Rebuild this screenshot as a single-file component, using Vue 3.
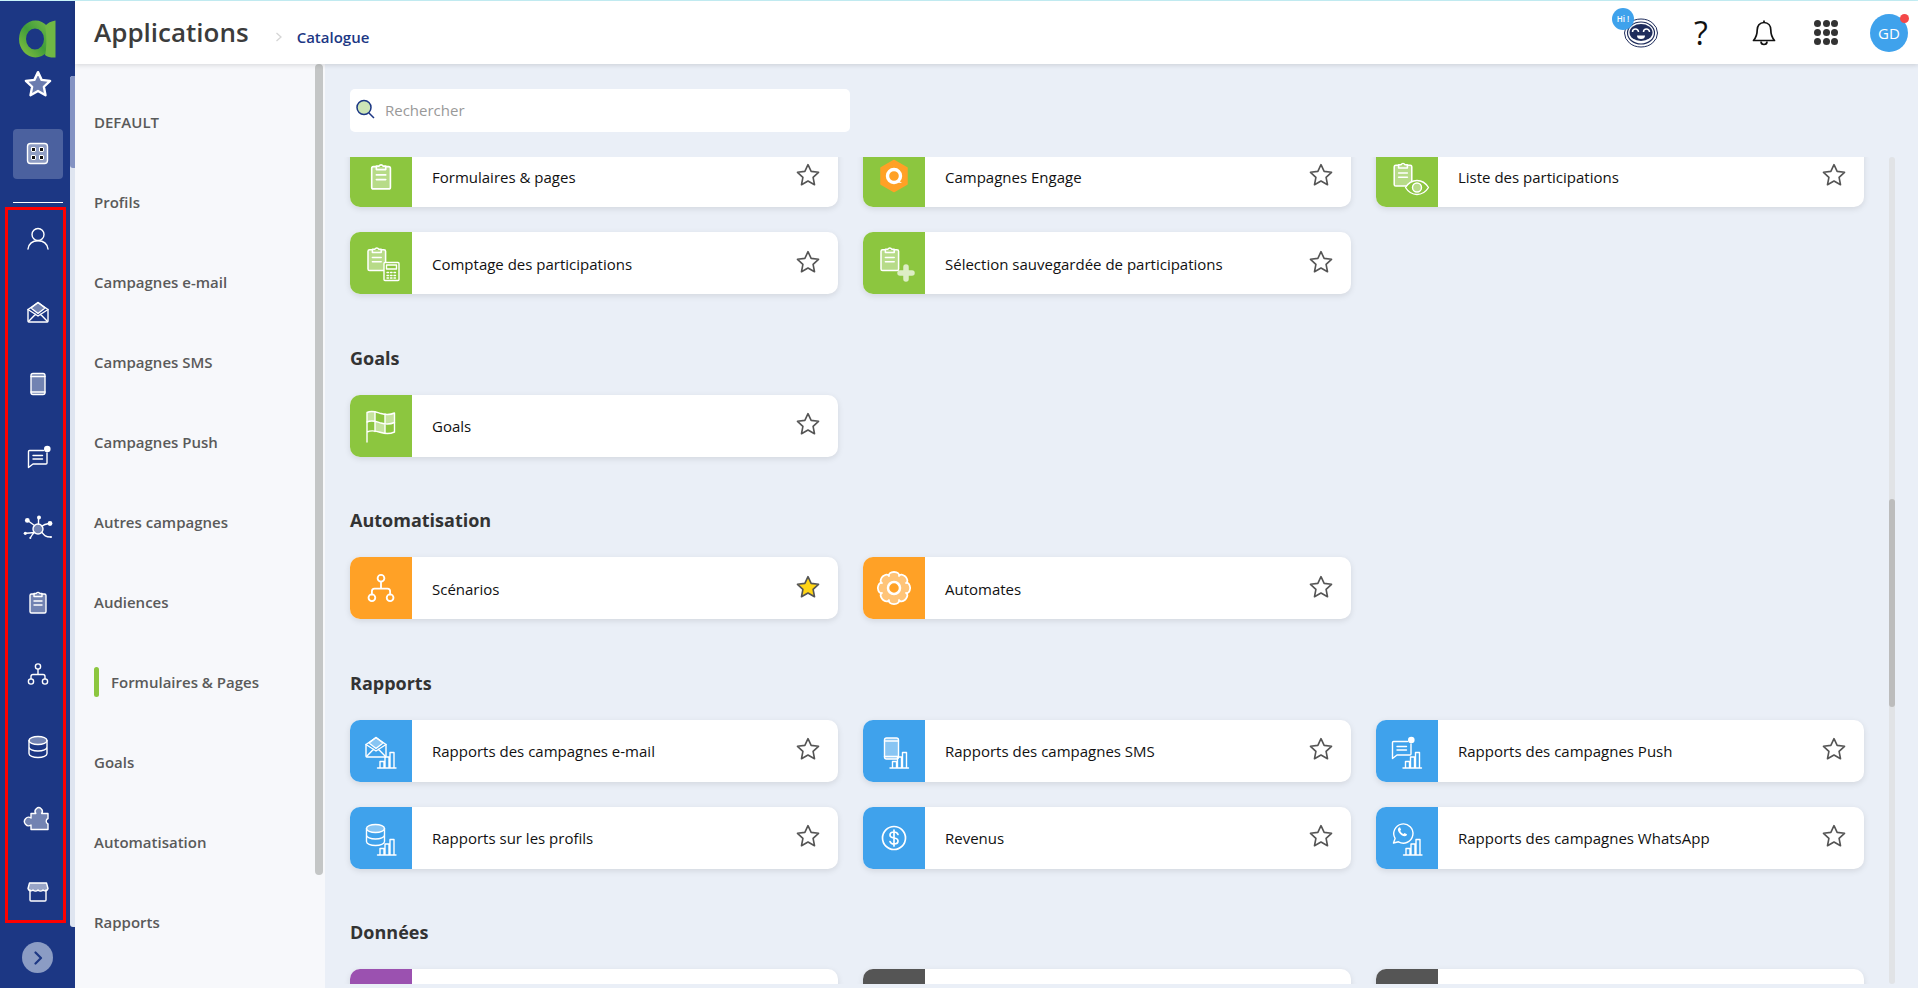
<script setup>
// outline of the cog drawn on the Automates tile
function gearPath() {
  const teeth = 8
  const step = Math.PI / teeth
  const p = (r, an) => `${(25 + r * Math.cos(an)).toFixed(2)} ${(25 + r * Math.sin(an)).toFixed(2)}`
  let d = `M${p(13, -step)} `
  for (let i = 0; i < teeth; i++) {
    const a = (i / teeth) * Math.PI * 2
    d += `C${p(15.6, a - step * 0.95)} ${p(16.2, a - step * 0.55)} ${p(16.2, a)} `
    d += `C${p(16.2, a + step * 0.55)} ${p(15.6, a + step * 0.95)} ${p(13, a + step)} `
  }
  return d + 'Z'
}
const gear = gearPath()

const menu = ['DEFAULT', 'Profils', 'Campagnes e-mail', 'Campagnes SMS', 'Campagnes Push', 'Autres campagnes', 'Audiences', 'Formulaires & Pages', 'Goals', 'Automatisation', 'Rapports']

const railIcons = ['user', 'mail', 'phone', 'chat', 'net', 'clip', 'tree', 'db', 'puzzle', 'store']

const sections = [
  {
    title: '',
    cards: [
      { label: 'Formulaires & pages', color: 'green', icon: 'form' },
      { label: 'Campagnes Engage', color: 'green', icon: 'engage' },
      { label: 'Liste des participations', color: 'green', icon: 'clipEye' },
      { label: 'Comptage des participations', color: 'green', icon: 'clipCalc' },
      { label: 'Sélection sauvegardée de participations', color: 'green', icon: 'clipPlus' }
    ]
  },
  { title: 'Goals', cards: [{ label: 'Goals', color: 'green', icon: 'flag' }] },
  {
    title: 'Automatisation',
    cards: [
      { label: 'Scénarios', color: 'orange', icon: 'scenario', fav: true },
      { label: 'Automates', color: 'orange', icon: 'gear' }
    ]
  },
  {
    title: 'Rapports',
    cards: [
      { label: 'Rapports des campagnes e-mail', color: 'blue', icon: 'repMail' },
      { label: 'Rapports des campagnes SMS', color: 'blue', icon: 'repPhone' },
      { label: 'Rapports des campagnes Push', color: 'blue', icon: 'repChat' },
      { label: 'Rapports sur les profils', color: 'blue', icon: 'repDb' },
      { label: 'Revenus', color: 'blue', icon: 'dollar' },
      { label: 'Rapports des campagnes WhatsApp', color: 'blue', icon: 'repWa' }
    ]
  },
  {
    title: 'Données',
    cards: [
      { label: '', color: 'purple' },
      { label: '', color: 'dark' },
      { label: '', color: 'dark' }
    ]
  }
]
</script>

<template>
  <div class="page">
    <svg class="sprites" width="0" height="0">
      <defs>
        <g id="g-clip">
          <path class="soft" d="M11 7H8.500A1.500 1.500 0 0 0 7 8.500v16A1.500 1.500 0 0 0 8.500 26h13a1.500 1.500 0 0 0 1.500-1.500v-16A1.500 1.500 0 0 0 21.500 7H19" />
          <path d="M11 9.500V6.500h2.300a1.900 1.900 0 0 1 3.400 0H19v3z" />
          <path d="M11 14h8M11 18h8" />
        </g>
        <g id="g-user">
          <circle cx="15" cy="10.500" r="6" />
          <path d="M5 25c.8-5 4.600-8.200 10-8.200S24.200 20 25 25" />
        </g>
        <g id="g-mail">
          <path class="soft" d="M8 11 15 5.500l7 5.500-7 5.500z" />
          <path d="M5 12.500 15 5.500l10 7v11.500a1 1 0 0 1-1 1H6a1 1 0 0 1-1-1z" />
          <path d="M5 12.500l10 6.500 10-6.500M5.500 24.500l7-7.200M24.500 24.500l-7-7.200" />
        </g>
        <g id="g-phone">
          <rect class="soft" x="8" y="4.500" width="14" height="21" rx="2" />
          <path d="M8 7.500h14M8 23h14" />
        </g>
        <g id="g-chat">
          <path d="M20.500 8.500H6.500a1 1 0 0 0-1 1V25.500L10 22h13a1 1 0 0 0 1-1V11" />
          <path d="M10 13.500h9.500M10 17h9.500" />
          <circle class="solid" cx="24.300" cy="7" r="3.300" />
        </g>
        <g id="g-net">
          <circle class="soft" cx="15" cy="15" r="5" />
          <path d="M11.500 11.500 6 7.500M15.500 10V4.500M19 12c2-1.500 4-2 7-2.500M11 18.500c-3 .5-5.500.8-8 .8M19 18.500c2 2.500 3 4.500 8.500 4.500M11.500 18.500c-2 1.500-3 3-4 5" />
          <g class="solid">
            <circle cx="4.300" cy="6.400" r="2.400" />
            <circle cx="16" cy="3.500" r="2" />
            <circle cx="27" cy="9.500" r="2.400" />
            <circle cx="2.300" cy="19.300" r="1.600" />
            <circle cx="28" cy="23" r="1" />
            <circle cx="7.300" cy="24" r="1" />
          </g>
        </g>
        <g id="g-tree">
          <circle cx="15" cy="7.500" r="2.600" />
          <path d="M15 10.100V15.500M8 20v-2.500a2 2 0 0 1 2-2h10a2 2 0 0 1 2 2V20" />
          <circle cx="8" cy="22.500" r="2.600" />
          <circle cx="22" cy="22.500" r="2.600" />
        </g>
        <g id="g-db">
          <ellipse class="soft" cx="15" cy="8.500" rx="9" ry="4" />
          <path d="M6 8.500v13c0 2.200 4 4 9 4s9-1.800 9-4v-13M6 15c0 2.200 4 4 9 4s9-1.800 9-4" />
        </g>
        <g id="g-puzzle">
          <path class="soft" d="M8 9.500h4.800a3.600 3.600 0 1 1 5.800 0H25v5a3 3 0 0 0 0 5.500v5.500H8v-4.500a4.200 4.200 0 1 1 0-7z" />
        </g>
        <g id="g-store">
          <path d="M7 13v10a1 1 0 0 0 1 1h14a1 1 0 0 0 1-1V13" />
          <path class="strong" d="M6.500 6h17L25 11.500a3 3 0 0 1-5 1.500 3.300 3.300 0 0 1-5 0 3.300 3.300 0 0 1-5 0 3 3 0 0 1-5-1.500z" />
        </g>
        <g id="g-bars">
          <path d="M0 16h18.500M2.500 16V9.500h4V16M7.500 16V5h4v11M12.500 16V.5h4V16" />
        </g>
        <path id="g-star" d="M12 2.500l2.900 6.200 6.800.8-5 4.700 1.300 6.800-6-3.400-6 3.400 1.300-6.800-5-4.700 6.800-.8z" />

        <linearGradient id="logo-ring" x1="0" y1="1" x2="1" y2="0">
          <stop offset="0" stop-color="#8cc63f" />
          <stop offset=".5" stop-color="#3f9c3a" />
          <stop offset="1" stop-color="#7cc04a" />
        </linearGradient>
      </defs>
    </svg>

    <div class="topline"></div>

    <div class="shell">
      <aside class="rail">
        <div class="rail-logo">
          <svg width="40" height="42" viewBox="0 0 40 42">
            <path fill-rule="evenodd" fill="url(#logo-ring)" d="M17.500 1.500a16.500 18.500 0 1 0 0 37 16.500 18.500 0 1 0 0-37zM17 9.500a9 10.500 0 1 1 0 21 9 10.500 0 1 1 0-21z" />
            <path d="M37.500 1.500v37c-4 .3-8-.5-10.500-2.500 1.800-5 1.800-23 0-29 2.500-3 6.500-5 10.500-5.500z" fill="#6fb844" />
          </svg>
        </div>

        <div class="rail-body">
          <div class="rail-col">
            <svg class="rail-star" width="30" height="30" viewBox="0 0 24 24">
              <use href="#g-star" />
            </svg>
            <div class="rail-active">
              <svg width="30" height="30" viewBox="0 0 30 30" class="line-icon">
                <rect class="soft" x="4.500" y="4.500" width="20" height="20" rx="3" />
                <g class="apps-dots">
                  <rect x="8.500" y="8.500" width="4" height="4" rx=".5" />
                  <rect x="16.500" y="8.500" width="4" height="4" rx=".5" />
                  <rect x="8.500" y="16.500" width="4" height="4" rx=".5" />
                  <rect x="16.500" y="16.500" width="4" height="4" rx=".5" />
                </g>
              </svg>
            </div>
            <div class="rail-sep"></div>
            <div class="rail-group">
              <svg v-for="ic in railIcons" :key="ic" class="line-icon" width="30" height="30" viewBox="0 0 30 30">
                <use :href="'#g-' + ic" />
              </svg>
            </div>
          </div>
          <div class="rail-scroll"><div class="rail-thumb"></div></div>
        </div>

        <div class="rail-foot">
          <div class="rail-toggle">
            <svg width="14" height="14" viewBox="0 0 14 14">
              <path d="M4.500 1.500 10 7l-5.500 5.500" fill="none" stroke="#1c3784" stroke-width="2.200" stroke-linecap="round" stroke-linejoin="round" />
            </svg>
          </div>
        </div>
      </aside>

      <div class="right">
        <header class="topbar">
          <h1 class="title">Applications</h1>
          <svg class="crumb-sep" width="10" height="12" viewBox="0 0 10 12">
            <path d="M2.500 2 7 6l-4.500 4" fill="none" stroke="#d5d5d5" stroke-width="1.300" />
          </svg>
          <span class="crumb">Catalogue</span>

          <div class="tools">
            <div class="bot">
              <svg width="36" height="32" viewBox="0 0 36 32">
                <ellipse cx="18" cy="16" rx="16.500" ry="14" fill="#fff" stroke="#1f2d5c" stroke-width="1" />
                <ellipse cx="18" cy="16" rx="13.500" ry="11" fill="#fff" stroke="#1f2d5c" stroke-width="1.200" />
                <ellipse cx="18" cy="15.500" rx="11.500" ry="8.500" fill="#1f2d5c" />
                <path d="M9.500 15a3 3 0 0 1 6 0M20.500 15a3 3 0 0 1 6 0" fill="none" stroke="#fff" stroke-width="1.500" />
                <path d="M14 18.500a4 3.500 0 0 0 8 0z" fill="#fff" />
              </svg>
              <span class="hi">Hi !</span>
            </div>
            <span class="help">?</span>
            <svg class="bell" width="26" height="28" viewBox="0 0 26 28">
              <path d="M13 3.500c-4.500 0-6.800 3.500-6.800 7.500 0 5-1.200 7.500-3.700 10.500h21c-2.500-3-3.700-5.500-3.700-10.500 0-4-2.300-7.500-6.800-7.500z" fill="none" stroke="#111" stroke-width="1.700" stroke-linejoin="round" />
              <path d="M13 1.500v2M10 22.500a3 3 0 0 0 6 0" fill="none" stroke="#111" stroke-width="1.700" />
            </svg>
            <div class="dots">
              <i v-for="n in 9" :key="n"></i>
            </div>
            <div class="avatar">GD<span class="avatar-dot"></span></div>
          </div>
        </header>

        <div class="below">
          <nav class="side">
            <ul class="side-list">
              <li v-for="m in menu" :key="m" class="side-item">
                <span v-if="m === 'Formulaires & Pages'" class="side-mark"></span>
                {{ m }}
              </li>
            </ul>
            <div class="side-thumb"></div>
          </nav>

          <main class="content">
            <div class="search">
              <svg width="26" height="26" viewBox="0 0 26 26">
                <circle cx="11" cy="9.500" r="7" fill="#cde5b6" stroke="#1c3784" stroke-width="1.500" />
                <path d="M16 15l5 5" stroke="#1c3784" stroke-width="1.500" />
              </svg>
              <span class="search-ph">Rechercher</span>
            </div>

            <div class="scroller">
              <div class="catalog">
                <div class="catalog-inner">
                  <section v-for="(s, si) in sections" :key="si" class="section">
                    <h2 v-if="s.title" class="section-title">{{ s.title }}</h2>
                    <div class="grid">
                      <article v-for="(c, ci) in s.cards" :key="ci" class="card">
                        <div class="tile" :class="c.color">
                          <svg v-if="c.icon" class="line-icon" width="50" height="50" viewBox="0 0 50 50">
                            <use v-if="c.icon === 'form'" href="#g-clip" transform="translate(7.500 7.500) scale(1.170)" />
                            <template v-else-if="c.icon === 'engage'">
                              <path d="M25 9.500l13 7.500v16l-13 7.500-13-7.500V17z" fill="#ffa126" stroke="#ffa126" stroke-linejoin="round" stroke-width="1.500" />
                              <circle cx="25" cy="25" r="6.500" fill="none" stroke="#fff" stroke-width="3.400" />
                              <path class="solid" d="M29 29l4 3-5.500-.5z" />
                            </template>
                            <template v-else-if="c.icon === 'clipEye'">
                              <use href="#g-clip" transform="translate(4.500 6.500) scale(1.100)" />
                              <path d="M23.500 36.500c2.500-4 6.500-7 11.500-7s9 3 11.500 7c-2.500 4-6.500 7-11.500 7s-9-3-11.500-7z" fill="#8cc63f" />
                              <circle class="soft" cx="35" cy="36.500" r="4.500" />
                            </template>
                            <template v-else-if="c.icon === 'clipCalc'">
                              <use href="#g-clip" transform="translate(4.300 4) scale(1.100)" />
                              <rect x="28" y="24.500" width="15" height="18" rx="1" fill="#8cc63f" />
                              <rect x="30.500" y="27" width="10" height="4" />
                              <path d="M31 34.500h9M31 37.500h9M31 40h9" stroke-dasharray="1.500 2" />
                            </template>
                            <template v-else-if="c.icon === 'clipPlus'">
                              <use href="#g-clip" transform="translate(4.300 4) scale(1.100)" />
                              <path d="M37 29v12M31 35h12" stroke="#fff" stroke-opacity=".7" stroke-width="5.500" stroke-linecap="round" />
                            </template>
                            <template v-else-if="c.icon === 'flag'">
                              <g class="flag-cells">
                                <path d="M11 11.500c3-1.500 5-1.500 8-.5v9.500c-3-1-5-1-8 .5z" />
                                <path d="M29 13c3 .8 6 .6 9.500-1v9.500c-3.500 1.600-6.500 1.800-9.500 1z" />
                                <path d="M19 20.500c3.500 1 6.500 2 10 2.500v9.500c-3.500-.5-6.500-1.500-10-2.500z" />
                              </g>
                              <path d="M11 41V11.500c5-2.500 9-.5 14 1s9 1.500 13.500-.5v19c-4.500 2-9 2-13.500.5s-9-3-14-.5" />
                              <path d="M11 21c5-2.500 9-.5 14 1s9 1.500 13.500-.5M19 11v19.500M29 13v19.500" />
                            </template>
                            <use v-else-if="c.icon === 'scenario'" href="#g-tree" transform="translate(5.500 5.500) scale(1.300)" />
                            <template v-else-if="c.icon === 'gear'">
                              <path class="soft" :d="gear" stroke-width="1.800" />
                              <circle cx="25" cy="25" r="6" fill="#ffa126" stroke-width="2.500" />
                            </template>
                            <template v-else-if="c.icon === 'repMail'">
                              <use href="#g-mail" transform="translate(5 6)" />
                              <use href="#g-bars" transform="translate(21.500 26)" />
                            </template>
                            <template v-else-if="c.icon === 'repPhone'">
                              <use href="#g-phone" transform="translate(7.500 7.500)" />
                              <use href="#g-bars" transform="translate(21 26)" />
                            </template>
                            <template v-else-if="c.icon === 'repChat'">
                              <use href="#g-chat" transform="translate(5 7)" />
                              <use href="#g-bars" transform="translate(21 26)" />
                            </template>
                            <template v-else-if="c.icon === 'repDb'">
                              <use href="#g-db" transform="translate(4.500 7)" />
                              <use href="#g-bars" transform="translate(21.500 26)" />
                            </template>
                            <template v-else-if="c.icon === 'dollar'">
                              <circle cx="25" cy="25" r="11.500" stroke-width="1.700" />
                              <path d="M29 21.500c-.5-1.500-2-2.500-4-2.500-2.300 0-4 1.200-4 3s1.700 2.700 4 3 4 1.200 4 3-1.700 3-4 3c-2 0-3.500-1-4-2.500M25 17v16" stroke-width="1.700" />
                            </template>
                            <template v-else-if="c.icon === 'repWa'">
                              <path d="M11.500 30l1.600-4.600a9.600 9.600 0 1 1 3.400 3.400z" />
                              <path class="solid" d="M17 14.500c-1.500 1-1.500 3 0 5 1.500 2.200 3.500 3.700 5.800 3.700 1.200 0 2.200-1 2.200-2l-2.500-1.300-1 1c-1.500-.5-2.700-1.700-3.300-3.200l.9-1-1.100-2.400z" />
                              <use href="#g-bars" transform="translate(21.500 26)" />
                            </template>
                          </svg>
                        </div>
                        <span class="card-label">{{ c.label }}</span>
                        <svg class="card-star" :class="{ fav: c.fav }" width="26" height="26" viewBox="0 0 24 24">
                          <use href="#g-star" />
                        </svg>
                      </article>
                    </div>
                  </section>
                </div>
              </div>
              <div class="catalog-scroll"><div class="catalog-thumb"></div></div>
            </div>
          </main>
        </div>
      </div>
    </div>
  </div>
</template>

<style scoped>
.page {
  height: 988px;
  display: flex;
  flex-direction: column;
  overflow: hidden;
  font-family: "Open Sans", "Liberation Sans", sans-serif;
  background: #eaeff7;
}

.sprites {
  position: absolute;
}

.topline {
  height: 1px;
  background: #c8f4fa;
  flex: none;
}

.shell {
  flex: 1;
  display: flex;
  min-height: 0;
}

/* left rail */
.rail {
  width: 75px;
  flex: none;
  background: #1c3784;
  display: flex;
  flex-direction: column;
}

.rail-logo {
  height: 63px;
  flex: none;
  padding: 18px 0 0 18px;
  box-sizing: border-box;
}

.rail-body {
  height: 863px;
  flex: none;
  display: flex;
}

.rail-col {
  width: 70px;
  flex: none;
  padding-top: 5px;
  display: flex;
  flex-direction: column;
  align-items: center;
  box-sizing: border-box;
  padding-left: 6px;
}

.rail-star {
  flex: none;
  fill: rgba(255, 255, 255, .35);
  stroke: #fff;
  stroke-width: 1.900;
  stroke-linejoin: round;
}

.rail-active {
  width: 50px;
  height: 50px;
  flex: none;
  margin-top: 30px;
  border-radius: 4px;
  background: #4b619f;
  display: flex;
  align-items: center;
  justify-content: center;
}

.apps-dots rect {
  fill: #111;
  stroke: #fff;
  stroke-width: 1;
}

.rail-sep {
  width: 50px;
  height: 1px;
  flex: none;
  margin-top: 23px;
  background: #fff;
}

.rail-group {
  height: 716px;
  width: 61px;
  flex: none;
  margin: 4px 0 0 -6px;
  padding: 14px 0 13px 5px;
  border: 3px solid #f00;
  box-sizing: border-box;
  display: flex;
  flex-direction: column;
  align-items: center;
  justify-content: space-between;
}

.rail-scroll {
  width: 5px;
  margin-top: 12px;
  flex: none;
  background: #dfe5f0;
  border-radius: 3px 0 0 3px;
}

.rail-thumb {
  height: 92px;
  background: #8493c3;
  border-radius: 3px 0 0 3px;
}

.rail-foot {
  flex: 1;
  padding-top: 15px;
  display: flex;
  justify-content: center;
}

.rail-toggle {
  width: 31px;
  height: 31px;
  border-radius: 50%;
  background: #8b9cc4;
  display: flex;
  align-items: center;
  justify-content: center;
  padding-left: 1px;
  box-sizing: border-box;
}

/* shared svg icon look */
.line-icon {
  flex: none;
  fill: none;
  stroke: #fff;
  stroke-width: 1.400;
  stroke-linecap: round;
  stroke-linejoin: round;
  overflow: visible;
}

.line-icon .soft,
.sprites .soft {
  fill: rgba(255, 255, 255, .38);
}

.sprites .solid,
.line-icon .solid {
  fill: #fff;
  stroke: none;
}

.sprites .strong {
  fill: rgba(255, 255, 255, .55);
}

.flag-cells {
  fill: rgba(255, 255, 255, .5);
  stroke: none;
}

/* top bar */
.right {
  flex: 1;
  min-width: 0;
  display: flex;
  flex-direction: column;
}

.topbar {
  height: 63px;
  flex: none;
  background: #fff;
  box-shadow: 0 1px 5px rgba(0, 0, 0, .14);
  display: flex;
  align-items: center;
  padding-left: 19px;
  position: relative;
  z-index: 2;
}

.title {
  margin: 0 0 2px;
  font-size: 26px;
  font-weight: 600;
  color: #3c3c3c;
}

.crumb-sep {
  margin: 8px 0 0 25px;
}

.crumb {
  margin: 8px 0 0 13px;
  font-size: 15px;
  font-weight: 600;
  color: #1c3784;
}

.tools {
  margin-left: auto;
  display: flex;
  align-items: center;
}

.bot {
  position: relative;
  margin-right: 33px;
  display: flex;
}

.hi {
  position: absolute;
  left: -11px;
  top: -9px;
  width: 22px;
  height: 22px;
  border-radius: 50%;
  background: #3fa2ec;
  color: #fff;
  font-size: 8px;
  font-weight: 600;
  line-height: 22px;
  text-align: center;
}

.help {
  font-size: 32px;
  line-height: 40px;
  color: #111;
  width: 18px;
  text-align: center;
  margin-right: 41px;
}

.bell {
  margin-right: 37px;
}

.dots {
  width: 24.400px;
  display: grid;
  grid-template-columns: repeat(3, 7px);
  gap: 1.700px;
  margin-right: 31.600px;
}

.dots i {
  width: 7px;
  height: 7px;
  border-radius: 50%;
  background: #333;
}

.avatar {
  position: relative;
  width: 38px;
  height: 38px;
  margin-right: 10px;
  border-radius: 50%;
  background: #3fa2ec;
  color: #fff;
  font-size: 15px;
  line-height: 38px;
  text-align: center;
}

.avatar-dot {
  position: absolute;
  right: -1px;
  top: 0;
  width: 9px;
  height: 9px;
  border-radius: 50%;
  background: #f44848;
}

.below {
  flex: 1;
  min-height: 0;
  display: flex;
}

/* catalogue menu */
.side {
  width: 250px;
  flex: none;
  background: #f7f8fb;
  display: flex;
  align-items: flex-start;
}

.side-list {
  width: 240px;
  flex: none;
  margin: 0;
  padding: 18px 0 0 19px;
  box-sizing: border-box;
  list-style: none;
}

.side-item {
  height: 80px;
  display: flex;
  align-items: center;
  gap: 12px;
  font-size: 15px;
  font-weight: 600;
  color: #5a5a5a;
}

.side-mark {
  width: 5px;
  height: 30px;
  border-radius: 3px;
  background: #8cc63f;
}

.side-thumb {
  width: 8px;
  height: 811px;
  flex: none;
  border-radius: 4px;
  background: #c4c6c6;
}

/* main */
.content {
  flex: 1;
  min-width: 0;
  padding: 25px 0 0 25px;
  display: flex;
  flex-direction: column;
}

.search {
  width: 500px;
  height: 43px;
  flex: none;
  background: #fff;
  border-radius: 5px;
  display: flex;
  align-items: center;
  padding-left: 3px;
  box-sizing: border-box;
}

.search-ph {
  margin: 0 0 2px 6px;
  font-size: 15px;
  color: #999;
}

.scroller {
  margin-top: 25px;
  height: 827px;
  flex: none;
  display: flex;
}

.catalog {
  width: 1539px;
  margin-left: -10px;
  padding-left: 10px;
  box-sizing: content-box;
  overflow: hidden;
  flex: none;
}

.catalog-inner {
  width: 1514px;
  margin-top: -12px;
}

.section + .section {
  margin-top: 51.500px;
}

.section-title {
  margin: 0 0 24px;
  font-size: 18px;
  line-height: 25px;
  font-weight: 700;
  color: #333;
}

.grid {
  display: grid;
  grid-template-columns: repeat(3, 488px);
  gap: 25px;
}

.card {
  height: 62px;
  background: #fff;
  border-radius: 10px;
  box-shadow: 0 2px 6px rgba(0, 0, 0, .1);
  display: flex;
  align-items: center;
  overflow: hidden;
  font-size: 15px;
  color: #111;
}

.tile {
  width: 62px;
  height: 100%;
  flex: none;
  display: flex;
  align-items: center;
  justify-content: center;
}

.green { background: #8cc63f; }
.orange { background: #ffa126; }
.blue { background: #3fa2ec; }
.purple { background: #9b51b0; }
.dark { background: #555; }

.card-label {
  margin: 1px 0 0 20px;
  flex: 1;
}

.card-star {
  flex: none;
  margin: 0 17px 3px 0;
  fill: #fff;
  stroke: #555;
  stroke-width: 1.500;
  stroke-linejoin: round;
}

.card-star.fav {
  fill: #ffd516;
}

.catalog-scroll {
  width: 6px;
  flex: none;
  background: #e1e3e6;
  border-radius: 3px;
}

.catalog-thumb {
  height: 208px;
  margin-top: 342px;
  background: #bcbcbc;
  border-radius: 3px;
}
</style>

<style>
body {
  overflow: hidden;
}
</style>
